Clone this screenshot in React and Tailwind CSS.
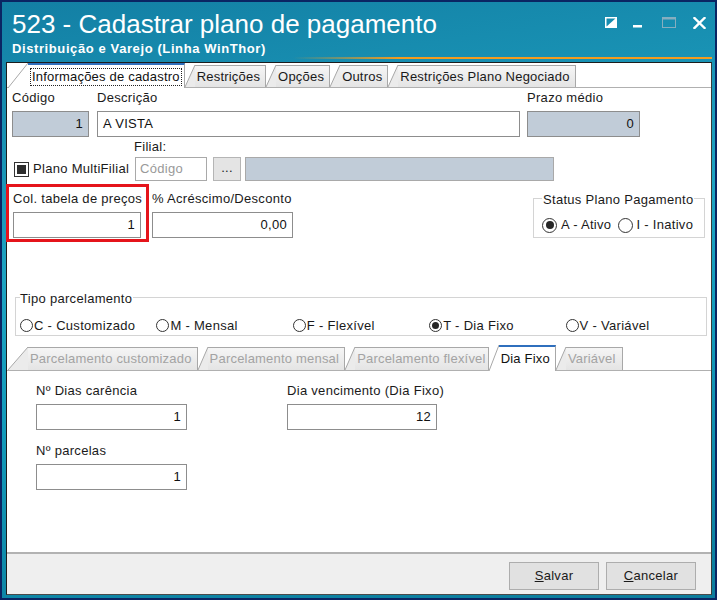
import React from 'react';

// Text box used across the form; "fill" gives the read-only blue-grey look
function Field({ value, fill = false, left = false, className = '' }) {
  return (
    <div
      className={`h-[26px] border border-[#8d8d8d] flex items-center px-[5px] text-[#111] ${
        fill ? 'bg-[#c1ccd8]' : 'bg-white'
      } ${left ? 'justify-start' : 'justify-end'} ${className}`}
    >
      {value}
    </div>
  );
}

function Label({ children, className = '' }) {
  return <div className={`h-4 leading-4 whitespace-nowrap ${className}`}>{children}</div>;
}

function Radio({ checked, big = false }) {
  return (
    <span
      className={`${big ? 'w-[15px] h-[15px]' : 'w-[13px] h-[13px]'} rounded-full border border-[#333] bg-white flex items-center justify-center shrink-0`}
    >
      {checked && <span className={`${big ? 'w-[8px] h-[8px]' : 'w-[7px] h-[7px]'} rounded-full bg-[#262626]`} />}
    </span>
  );
}

// Page-control tab with the slanted left edge
function Tab({ label, active = false, disabled = false, wide = false, tall = 25, low = 22, pad = 'pr-[5px]', focus = false }) {
  const h = active ? tall : low;
  const w = wide ? 20 : 10;
  const fill = active ? '#ffffff' : '#ebebeb';
  return (
    <div className={`flex shrink-0 ${active ? '-mb-px relative z-10' : ''}`} style={{ height: h }}>
      <svg width={w} height={h} className="block shrink-0">
        <polygon points={`0,${h} ${w},0 ${w},${h}`} fill={fill} />
        <line x1="0" y1={h} x2={w} y2="0" stroke="#a8a8a8" strokeWidth="1" />
      </svg>
      <div
        className={`flex items-center pl-[2px] ${pad} border-r border-[#a8a8a8] whitespace-nowrap tracking-[0.2px] ${
          active
            ? 'bg-white border-t-2 border-t-[#2f6fbd] text-[#111]'
            : 'bg-[linear-gradient(#f5f5f5,#e4e4e4)] border-t border-t-[#a8a8a8]'
        } ${disabled ? 'text-[#a3a3a3]' : 'text-[#1a1a1a]'}`}
      >
        {focus ? (
          <span className="border border-dotted border-[#222] px-[1px] leading-[16px]">{label}</span>
        ) : (
          label
        )}
      </div>
    </div>
  );
}

function WindowControls() {
  return (
    <div className="flex items-start pt-[15px] pr-[9px]">
      <svg width="12" height="11" className="block">
        <rect x="0.75" y="0.75" width="10.5" height="9.5" fill="none" stroke="#ffffff" strokeWidth="1.5" />
        <polygon points="11,1 11,10 1,10" fill="#ffffff" />
      </svg>
      <svg width="9" height="11" className="block ml-[16px]">
        <rect x="0" y="8" width="9" height="2.5" fill="#ffffff" />
      </svg>
      <svg width="14" height="11" className="block ml-[20px]">
        <rect x="0.5" y="0.5" width="13" height="10" fill="none" stroke="#86aebf" strokeWidth="1" />
        <rect x="0.5" y="0.5" width="13" height="2" fill="#86aebf" />
      </svg>
      <svg width="13" height="12" className="block ml-[17px]">
        <path d="M1.5 1 L11.5 11 M11.5 1 L1.5 11" stroke="#ffffff" strokeWidth="2.4" strokeLinecap="square" />
      </svg>
    </div>
  );
}

export default function App() {
  return (
    <div className="w-[717px] h-[600px] bg-[#0a2563] pt-[2px] px-[2px] pb-[2px] font-['Liberation_Sans',Arial,sans-serif] text-[13px] tracking-[0.3px] text-[#1a1a1a]">
      <div className="h-full flex flex-col bg-[linear-gradient(172deg,#137fa4_0%,#1ea3c2_40%,#139bbb_60%,#0b7c9c_100%)]">
        {/* Title bar */}
        <div className="h-[55px] flex justify-between">
          <div className="pl-[10px] pt-[7px] text-white tracking-normal">
            <div className="text-[26px] leading-[30px]">523 - Cadastrar plano de pagamento</div>
            <div className="text-[13px] leading-[14px] font-bold mt-[3px] tracking-[0.6px]">Distribuição e Varejo (Linha WinThor)</div>
          </div>
          <WindowControls />
        </div>
        <div className="h-[2px] mr-[3px] bg-[linear-gradient(90deg,transparent_0%,transparent_41%,#f39c1e_56%,#f39c1e_100%)]" />
        <div className="h-[3px]" />

        {/* Form panel */}
        <div className="flex-1 pl-[4px] pr-[3px] pb-[3px] flex">
          <div className="flex-1 flex flex-col bg-white border border-[#1c1c1c] border-r-[#3a3a3a] border-b-[#4a4a4a]">
            {/* Main tabs */}
            <div className="h-[25px] flex items-end border-b border-[#b0b0b0] pl-[1px]">
              <Tab label="Informações de cadastro" active wide focus pad="pr-[2px]" />
              <Tab label="Restrições" />
              <Tab label="Opções" />
              <Tab label="Outros" />
              <Tab label="Restrições Plano Negociado" />
            </div>

            {/* Row: código / descrição / prazo */}
            <div className="flex mt-[2px] pl-[5px]">
              <div className="w-[77px]">
                <Label>Código</Label>
                <Field value="1" fill className="mt-[5px]" />
              </div>
              <div className="w-[423px] ml-[8px]">
                <Label>Descrição</Label>
                <Field value="A VISTA" left className="mt-[5px]" />
              </div>
              <div className="w-[113px] ml-[7px]">
                <Label>Prazo médio</Label>
                <Field value="0" fill className="mt-[5px]" />
              </div>
            </div>

            {/* Row: filial */}
            <Label className="mt-[2px] pl-[127px]">Filial:</Label>
            <div className="flex items-center h-[24px] mt-[2px] pl-[7px]">
              <div className="w-[121px] flex items-center">
                <span className="w-[15px] h-[15px] border border-[#333] bg-white p-[2px] shrink-0">
                  <span className="block w-full h-full bg-[#2e2e2e]" />
                </span>
                <span className="ml-[4px] whitespace-nowrap">Plano MultiFilial</span>
              </div>
              <div className="w-[72px] h-[24px] border border-[#a9a9a9] bg-white flex items-center px-[4px] text-[#999]">
                Código
              </div>
              <div className="w-[28px] h-[24px] ml-[6px] border border-[#b5b5b5] bg-[#e4e4e4] flex items-center justify-center text-[#222] leading-none pb-[4px]">
                ...
              </div>
              <div className="w-[309px] h-[24px] ml-[4px] border border-[#a9a9a9] bg-[#c1ccd8]" />
            </div>

            {/* Row: tabela de preços / acréscimo / status */}
            <div className="flex items-start mt-[3px] -ml-px">
              <div className="w-[143px] border-[3px] border-[#e5141b] pt-[4px] pl-[4px] pr-[5px] pb-[1px]">
                <Label>Col. tabela de preços</Label>
                <Field value="1" className="mt-[5px]" />
              </div>
              <div className="w-[141px] ml-[3px] pt-[7px]">
                <Label>% Acréscimo/Desconto</Label>
                <Field value="0,00" className="mt-[5px]" />
              </div>
              <fieldset className="w-[172px] ml-[240px] mt-[5px] border border-[#d4d4d4] px-[8px] pt-[9px] pb-[4px]">
                <legend className="pt-[3px] px-[1px] leading-4">Status Plano Pagamento</legend>
                <div className="flex items-center h-4">
                  <Radio checked big />
                  <span className="ml-[4px] whitespace-nowrap">A - Ativo</span>
                  <span className="ml-[7px]">
                    <Radio big />
                  </span>
                  <span className="ml-[3px] whitespace-nowrap">I - Inativo</span>
                </div>
              </fieldset>
            </div>

            {/* Tipo parcelamento */}
            <fieldset className="ml-[8px] w-[692px] mt-[46px] border border-[#d4d4d4] px-[4px] pt-[9px] pb-[3px]">
              <legend className="pt-[3px] leading-4 pr-[1px]">Tipo parcelamento</legend>
              <div className="grid grid-cols-5 h-4 items-center">
                {[
                  ['C - Customizado', false],
                  ['M - Mensal', false],
                  ['F - Flexível', false],
                  ['T - Dia Fixo', true],
                  ['V - Variável', false],
                ].map(([text, on]) => (
                  <div key={text} className="flex items-center">
                    <Radio checked={on} />
                    <span className="ml-[1px] whitespace-nowrap">{text}</span>
                  </div>
                ))}
              </div>
            </fieldset>

            {/* Sub tabs */}
            <div className="h-[26px] mt-[9px] flex items-end border-b border-[#b0b0b0] pl-[1px]">
              <Tab label="Parcelamento customizado" disabled wide low={23} pad="pr-[5px]" />
              <Tab label="Parcelamento mensal" disabled low={23} pad="pr-[5px]" />
              <Tab label="Parcelamento flexível" disabled low={23} pad="pr-[2px]" />
              <Tab label="Dia Fixo" active tall={26} low={23} pad="pr-[5px]" />
              <Tab label="Variável" disabled low={23} pad="pr-[6px]" />
            </div>

            {/* Dia fixo fields */}
            <div className="flex mt-[12px] pl-[29px]">
              <div className="w-[151px]">
                <Label>Nº Dias carência</Label>
                <Field value="1" className="mt-[5px]" />
                <Label className="mt-[13px]">Nº parcelas</Label>
                <Field value="1" className="mt-[5px]" />
              </div>
              <div className="w-[150px] ml-[100px]">
                <Label>Dia vencimento (Dia Fixo)</Label>
                <Field value="12" className="mt-[5px]" />
              </div>
            </div>

            {/* Buttons */}
            <div className="mt-auto h-[42px] bg-[#efefef] border-t-2 border-[#b2b2b2] flex justify-end items-start pt-[8px] pr-[15px] gap-[7px]">
              <button className="w-[90px] h-[28px] bg-[#e1e1e1] border border-[#adadad] text-[#1a1a1a]">
                <span className="underline">S</span>alvar
              </button>
              <button className="w-[90px] h-[28px] bg-[#e1e1e1] border border-[#adadad] text-[#1a1a1a]">
                <span className="underline">C</span>ancelar
              </button>
            </div>
          </div>
        </div>
      </div>
    </div>
  );
}
